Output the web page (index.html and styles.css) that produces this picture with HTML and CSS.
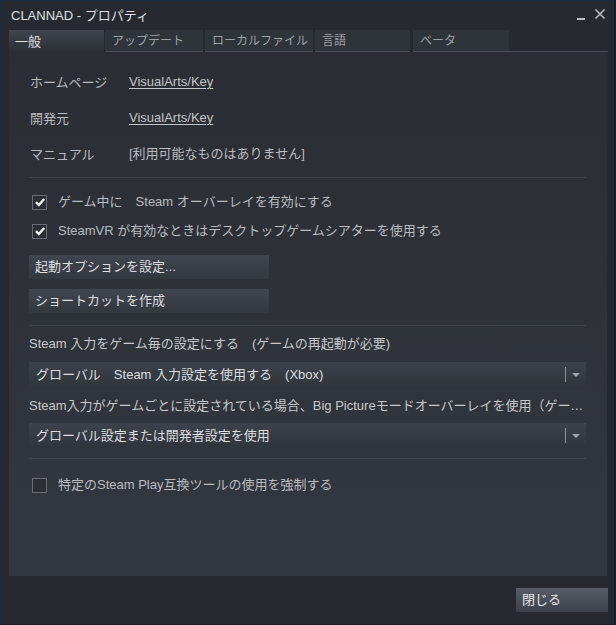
FILE: index.html
```html
<!DOCTYPE html>
<html lang="ja">
<head>
<meta charset="utf-8">
<title>CLANNAD - プロパティ</title>
<link rel="stylesheet" href="styles.css">
</head>
<body>
<div class="window">
  <div class="titlebar">
    <span class="title">CLANNAD - プロパティ</span>
    <div class="controls">
      <svg class="ctl" width="10" height="10" viewBox="0 0 10 10"><rect x="1" y="8" width="8" height="2" fill="#b9bcbf"/></svg>
      <svg class="ctl" width="12" height="12" viewBox="0 0 12 12"><path d="M1.5 1.5 L10.5 10.5 M10.5 1.5 L1.5 10.5" stroke="#b9bcbf" stroke-width="1.6"/></svg>
    </div>
  </div>
  <div class="tabs">
    <div class="tab active">一般</div>
    <div class="tab">アップデート</div>
    <div class="tab">ローカルファイル</div>
    <div class="tab">言語</div>
    <div class="tab">ベータ</div>
    <div class="tabfill"></div>
  </div>
  <div class="panel">
    <div class="info">
      <div class="row"><span class="label">ホームページ</span><span class="value link">VisualArts/Key</span></div>
      <div class="row"><span class="label">開発元</span><span class="value link">VisualArts/Key</span></div>
      <div class="row"><span class="label">マニュアル</span><span class="value">[利用可能なものはありません]</span></div>
    </div>
    <div class="sep sep1"></div>
    <div class="checks">
      <label class="check"><span class="box"><svg width="12" height="12" viewBox="0 0 12 12"><path d="M2 6.2 L4.8 9 L10.2 3" fill="none" stroke="#f2f2f2" stroke-width="2.4"/></svg></span><span>ゲーム中に　Steam オーバーレイを有効にする</span></label>
      <label class="check"><span class="box"><svg width="12" height="12" viewBox="0 0 12 12"><path d="M2 6.2 L4.8 9 L10.2 3" fill="none" stroke="#f2f2f2" stroke-width="2.4"/></svg></span><span>SteamVR が有効なときはデスクトップゲームシアターを使用する</span></label>
    </div>
    <div class="buttons">
      <div class="btn">起動オプションを設定...</div>
      <div class="btn">ショートカットを作成</div>
    </div>
    <div class="sep sep2"></div>
    <div class="field">
      <div class="flabel">Steam 入力をゲーム毎の設定にする　(ゲームの再起動が必要)</div>
      <div class="select"><span class="stext">グローバル　Steam 入力設定を使用する　(Xbox)</span><span class="divider"></span><span class="arrow"></span></div>
    </div>
    <div class="field">
      <div class="flabel ellipsis">Steam入力がゲームごとに設定されている場合、Big Pictureモードオーバーレイを使用（ゲームの再起動が必要）</div>
      <div class="select"><span class="stext">グローバル設定または開発者設定を使用</span><span class="divider"></span><span class="arrow"></span></div>
    </div>
    <div class="sep sep3"></div>
    <label class="check last"><span class="box"></span><span>特定のSteam Play互換ツールの使用を強制する</span></label>
  </div>
  <div class="footer">
    <div class="closebtn">閉じる</div>
  </div>
</div>
</body>
</html>
```
FILE: styles.css
```css
html, body {
  margin: 0;
  padding: 0;
  background: #171e29;
}
body {
  width: 616px;
  height: 625px;
  overflow: hidden;
  font-family: "Liberation Sans", "Noto Sans CJK JP", sans-serif;
  font-size: 13px;
  color: #b9bcc0;
}
.window {
  width: 613px;
  height: 623px;
  border-left: 1px solid #1c2b40;
  border-top: 1px solid #1c2b40;
  background: #262a30;
  display: flex;
  flex-direction: column;
}
.titlebar {
  height: 29px;
  display: flex;
  align-items: center;
  justify-content: space-between;
  padding: 0 8px 0 10px;
}
.title {
  color: #dfe1e3;
  font-size: 13px;
  line-height: 16px;
  margin-top: 1px;
}
.controls {
  display: flex;
  align-items: flex-end;
  gap: 8px;
  margin-top: -4px;
}
.ctl { display: block; }
.tabs {
  display: flex;
  height: 22px;
  padding-left: 8px;
  padding-right: 6px;
}
.tab {
  height: 19px;
  padding-top: 2px;
  background: #2f333a;
  color: #9ea2a7;
  padding-left: 7px;
  line-height: 19px;
  font-size: 12px;
  letter-spacing: 0;
  border-bottom: 1px solid #4a4f57;
  box-sizing: content-box;
  white-space: nowrap;
  overflow: hidden;
}
.tab:nth-child(1) { width: 89px; margin-right: 1px; }
.tab:nth-child(2) { width: 91px; margin-right: 2px; }
.tab:nth-child(3) { width: 101px; margin-right: 2px; }
.tab:nth-child(4) { width: 88px; margin-right: 3px; }
.tab:nth-child(5) { width: 89px; }
.tab.active {
  background: linear-gradient(#40454d, #2c3036);
  color: #e0e2e4;
  font-size: 13px;
  border-bottom: 1px solid #2b2e34;
  padding-left: 6px;
}
.tabfill {
  flex: 1;
  border-bottom: 1px solid #4a4f57;
}
.panel {
  margin-left: 8px;
  width: 598px;
  height: 524px;
  box-sizing: border-box;
  background: linear-gradient(#2a2d33, #33373f);
  padding: 0 20px 0 20px;
  display: flex;
  flex-direction: column;
}
.info {
  padding-top: 22px;
  display: flex;
  flex-direction: column;
  gap: 20px;
}
.row {
  display: flex;
  height: 16px;
  line-height: 16px;
}
.label {
  width: 99px;
  padding-left: 1px;
  padding-top: 1px;
}
.value { color: #b9bcc0; }
.link {
  text-decoration: underline;
  text-underline-offset: 2px;
  color: #c3c6c9;
}
.sep {
  height: 1px;
  background: #3f434a;
  width: 557px;
}
.sep1 { margin-top: 15px; }
.checks {
  display: flex;
  flex-direction: column;
  gap: 15px;
  margin-top: 17px;
}
.check {
  display: flex;
  align-items: center;
  height: 14px;
  padding-left: 3px;
  gap: 11px;
  line-height: 16px;
}
.box {
  width: 13px;
  height: 13px;
  border: 1px solid #6b6e73;
  background: #2b2e34;
  display: flex;
  align-items: center;
  justify-content: center;
}
.box svg { display: block; }
.buttons {
  display: flex;
  flex-direction: column;
  gap: 10px;
  margin-top: 17px;
}
.btn {
  width: 234px;
  height: 24px;
  line-height: 24px;
  padding-left: 6px;
  background: linear-gradient(#41454d, #33373e);
  color: #dcdee0;
}
.sep2 { margin-top: 12px; }
.field {
  display: flex;
  flex-direction: column;
}
.flabel {
  height: 16px;
  line-height: 16px;
  margin-top: 10px;
  margin-bottom: 10px;
  color: #c6c9cc;
  width: 557px;
}
.ellipsis {
  white-space: nowrap;
  overflow: hidden;
  text-overflow: ellipsis;
  margin-top: 11px;
  margin-bottom: 9px;
}
.select {
  width: 557px;
  height: 25px;
  box-sizing: border-box;
  background: linear-gradient(#3d4149, #30343b);
  display: flex;
  align-items: center;
  padding-left: 7px;
  color: #dcdee0;
}
.stext { flex: 1; line-height: 16px; }
.divider {
  width: 1px;
  height: 15px;
  background: #8d9196;
}
.arrow {
  width: 0;
  height: 0;
  border-left: 4px solid transparent;
  border-right: 4px solid transparent;
  border-top: 4px solid #a3a7ab;
  margin: 0 6px 0 6px;
}
.sep3 { margin-top: 10px; }
.check.last { margin-top: 19px; }
.footer {
  display: flex;
  justify-content: flex-end;
  padding-top: 12px;
  padding-right: 6px;
}
.closebtn {
  width: 86px;
  height: 24px;
  line-height: 24px;
  padding-left: 6px;
  background: linear-gradient(#575c67, #3c4049);
  color: #e3e5e7;
}
```
